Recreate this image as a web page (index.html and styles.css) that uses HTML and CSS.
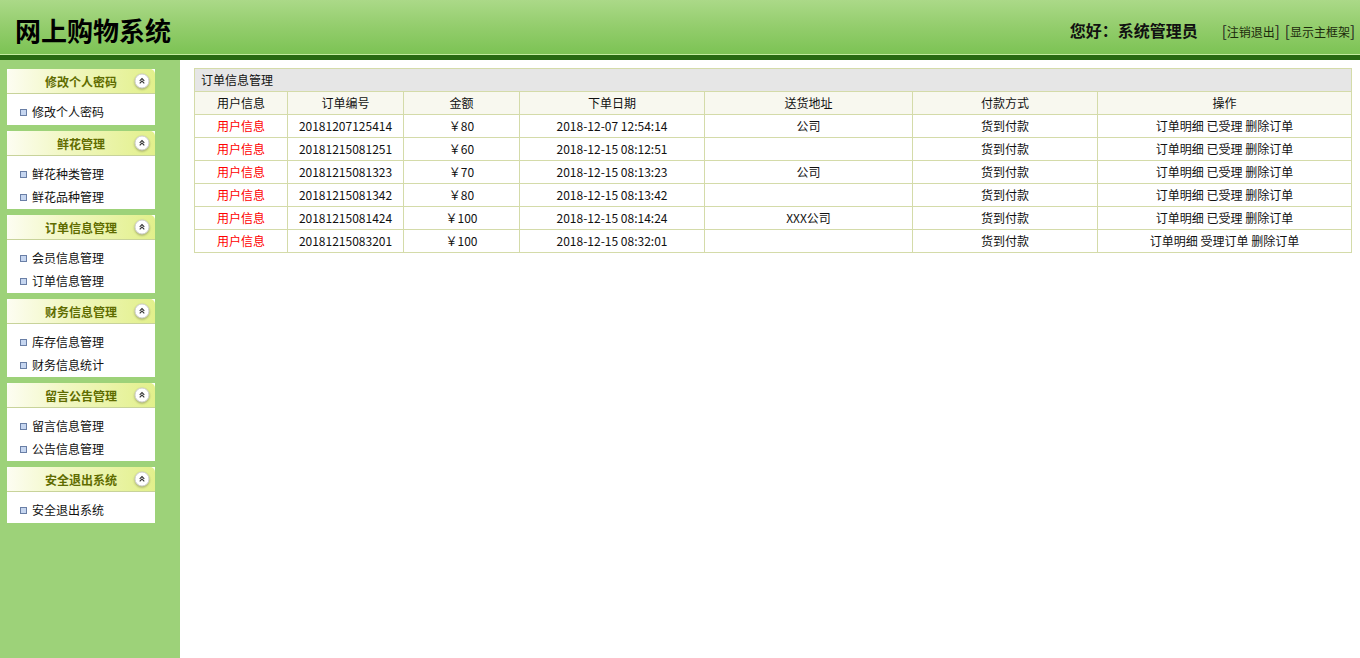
FILE: index.html
```html
<!DOCTYPE html>
<html lang="zh-CN">
<head>
<meta charset="utf-8">
<title>网上购物系统</title>
<link rel="stylesheet" href="styles.css">
</head>
<body>
<div class="page">
  <header class="top">
    <h1 class="logo">网上购物系统</h1>
    <div class="user">
      <span class="hello">您好：系统管理员</span>
      <a class="toplink" href="#"><span class="br">[</span>注销退出<span class="br">]</span></a>
      <a class="toplink" href="#"><span class="br">[</span>显示主框架<span class="br">]</span></a>
    </div>
  </header>
  <div class="topline"></div>
  <div class="main">
    <aside class="side">
      <section class="panel">
        <div class="panel-hd"><span class="panel-title">修改个人密码</span><span class="toggle"><svg viewBox="0 0 16 16" width="16" height="16"><circle cx="8" cy="8" r="7" fill="#fff" stroke="#cfcfcf" stroke-width="1"/><path d="M5.7 7.8 L8 5.6 L10.3 7.8 M5.7 10.3 L8 8.1 L10.3 10.3" fill="none" stroke="#333" stroke-width="1.1"/></svg></span></div>
        <ul class="panel-bd single"><li>修改个人密码</li></ul>
      </section>
      <section class="panel">
        <div class="panel-hd"><span class="panel-title">鲜花管理</span><span class="toggle"><svg viewBox="0 0 16 16" width="16" height="16"><circle cx="8" cy="8" r="7" fill="#fff" stroke="#cfcfcf" stroke-width="1"/><path d="M5.7 7.8 L8 5.6 L10.3 7.8 M5.7 10.3 L8 8.1 L10.3 10.3" fill="none" stroke="#333" stroke-width="1.1"/></svg></span></div>
        <ul class="panel-bd"><li>鲜花种类管理</li><li>鲜花品种管理</li></ul>
      </section>
      <section class="panel">
        <div class="panel-hd"><span class="panel-title">订单信息管理</span><span class="toggle"><svg viewBox="0 0 16 16" width="16" height="16"><circle cx="8" cy="8" r="7" fill="#fff" stroke="#cfcfcf" stroke-width="1"/><path d="M5.7 7.8 L8 5.6 L10.3 7.8 M5.7 10.3 L8 8.1 L10.3 10.3" fill="none" stroke="#333" stroke-width="1.1"/></svg></span></div>
        <ul class="panel-bd"><li>会员信息管理</li><li>订单信息管理</li></ul>
      </section>
      <section class="panel">
        <div class="panel-hd"><span class="panel-title">财务信息管理</span><span class="toggle"><svg viewBox="0 0 16 16" width="16" height="16"><circle cx="8" cy="8" r="7" fill="#fff" stroke="#cfcfcf" stroke-width="1"/><path d="M5.7 7.8 L8 5.6 L10.3 7.8 M5.7 10.3 L8 8.1 L10.3 10.3" fill="none" stroke="#333" stroke-width="1.1"/></svg></span></div>
        <ul class="panel-bd"><li>库存信息管理</li><li>财务信息统计</li></ul>
      </section>
      <section class="panel">
        <div class="panel-hd"><span class="panel-title">留言公告管理</span><span class="toggle"><svg viewBox="0 0 16 16" width="16" height="16"><circle cx="8" cy="8" r="7" fill="#fff" stroke="#cfcfcf" stroke-width="1"/><path d="M5.7 7.8 L8 5.6 L10.3 7.8 M5.7 10.3 L8 8.1 L10.3 10.3" fill="none" stroke="#333" stroke-width="1.1"/></svg></span></div>
        <ul class="panel-bd"><li>留言信息管理</li><li>公告信息管理</li></ul>
      </section>
      <section class="panel">
        <div class="panel-hd"><span class="panel-title">安全退出系统</span><span class="toggle"><svg viewBox="0 0 16 16" width="16" height="16"><circle cx="8" cy="8" r="7" fill="#fff" stroke="#cfcfcf" stroke-width="1"/><path d="M5.7 7.8 L8 5.6 L10.3 7.8 M5.7 10.3 L8 8.1 L10.3 10.3" fill="none" stroke="#333" stroke-width="1.1"/></svg></span></div>
        <ul class="panel-bd single"><li>安全退出系统</li></ul>
      </section>
    </aside>
    <main class="content">
      <table class="grid">
        <colgroup>
          <col class="c1"><col class="c2"><col class="c3"><col class="c4"><col class="c5"><col class="c6"><col class="c7">
        </colgroup>
        <thead>
          <tr class="caption-row"><th colspan="7">订单信息管理</th></tr>
          <tr class="head-row"><th>用户信息</th><th>订单编号</th><th>金额</th><th>下单日期</th><th>送货地址</th><th>付款方式</th><th>操作</th></tr>
        </thead>
        <tbody>
          <tr><td class="red">用户信息</td><td>20181207125414</td><td>￥80</td><td>2018-12-07 12:54:14</td><td>公司</td><td>货到付款</td><td>订单明细 已受理 删除订单</td></tr>
          <tr><td class="red">用户信息</td><td>20181215081251</td><td>￥60</td><td>2018-12-15 08:12:51</td><td></td><td>货到付款</td><td>订单明细 已受理 删除订单</td></tr>
          <tr><td class="red">用户信息</td><td>20181215081323</td><td>￥70</td><td>2018-12-15 08:13:23</td><td>公司</td><td>货到付款</td><td>订单明细 已受理 删除订单</td></tr>
          <tr><td class="red">用户信息</td><td>20181215081342</td><td>￥80</td><td>2018-12-15 08:13:42</td><td></td><td>货到付款</td><td>订单明细 已受理 删除订单</td></tr>
          <tr><td class="red">用户信息</td><td>20181215081424</td><td>￥100</td><td>2018-12-15 08:14:24</td><td>XXX公司</td><td>货到付款</td><td>订单明细 已受理 删除订单</td></tr>
          <tr><td class="red">用户信息</td><td>20181215083201</td><td>￥100</td><td>2018-12-15 08:32:01</td><td></td><td>货到付款</td><td>订单明细 受理订单 删除订单</td></tr>
        </tbody>
      </table>
    </main>
  </div>
</div>
</body>
</html>
```
FILE: styles.css
```css
* { box-sizing: border-box; }
html, body { margin: 0; padding: 0; height: 100%; }
body {
  font-family: "Noto Sans CJK SC", "Microsoft YaHei", "Liberation Sans", sans-serif;
  font-size: 12px;
  color: #111;
  background: #fff;
}
.page { display: flex; flex-direction: column; height: 100vh; }
.top {
  height: 54px;
  flex: none;
  display: flex;
  align-items: center;
  justify-content: space-between;
  padding: 6px 5px 0 15px;
  background: linear-gradient(to bottom, #abd988 0%, #93cd6c 50%, #7cc354 100%);
}
.logo {
  margin: 0;
  font-size: 26px;
  font-weight: bold;
  color: #000;
  line-height: 1;
}
.user { display: flex; align-items: center; gap: 5px; }
.hello {
  font-family: "Noto Sans CJK TC", "Noto Sans CJK SC", sans-serif;
  font-size: 16px;
  font-weight: bold;
  color: #111;
  margin-right: 19px;
}
.toplink { color: #1c2a0c; text-decoration: none; font-size: 12px; }
.br { font-size: 15px; color: #222; }
.topline {
  height: 6px;
  flex: none;
  border-top: 1px solid #c3ec9f;
  background: #286a12;
}
.main { flex: 1; display: flex; min-height: 0; }
.side {
  width: 180px;
  flex: none;
  background: #9dd279;
  padding: 9px 25px 0 7px;
  display: flex;
  flex-direction: column;
  gap: 6px;
}
.panel { width: 148px; background: #fff; }
.panel-hd {
  height: 25px;
  display: flex;
  align-items: center;
  justify-content: center;
  position: relative;
  border-radius: 5px 5px 0 0;
  background: linear-gradient(to right, #fdfdf2 0%, #f1f7c2 40%, #e2f08b 100%);
  border-bottom: 1px solid #c8d39a;
}
.panel-title { font-weight: bold; color: #5f6c00; font-size: 12px; }
.toggle {
  position: absolute;
  right: 5px;
  top: 4px;
  width: 16px;
  height: 16px;
  filter: drop-shadow(0 1px 1px rgba(0,0,0,0.3));
}
.toggle svg { display: block; }
.panel-bd { list-style: none; margin: 0; padding: 6px 0 1px 0; }
.panel-bd.single { padding-bottom: 2px; }
.panel-bd li {
  height: 23px;
  line-height: 23px;
  padding-left: 25px;
  position: relative;
  color: #111;
}
.panel-bd li::before {
  content: "";
  position: absolute;
  left: 13px;
  top: 9px;
  width: 5px;
  height: 5px;
  border: 1px solid #6a7fa6;
  background: #c6d6f0;
}
.content { flex: 1; padding: 8px 8px 0 14px; }
.grid {
  width: 100%;
  border-collapse: collapse;
  table-layout: fixed;
  border: 1px solid #d4dba9;
}
.c1 { width: 93px; } .c2 { width: 116px; } .c3 { width: 116px; }
.c4 { width: 185px; } .c5 { width: 208px; } .c6 { width: 185px; } .c7 { width: auto; }
.grid th, .grid td {
  border: 1px solid #d4dba9;
  height: 23px;
  padding: 0 0 1px 0;
  font-weight: normal;
  text-align: center;
  white-space: nowrap;
  font-size: 12px;
}
.caption-row th {
  background: #e6e6e6;
  text-align: left;
  padding-left: 6px;
}
.head-row th { background: #f8f8ef; }
.red { color: #f00; }
```
